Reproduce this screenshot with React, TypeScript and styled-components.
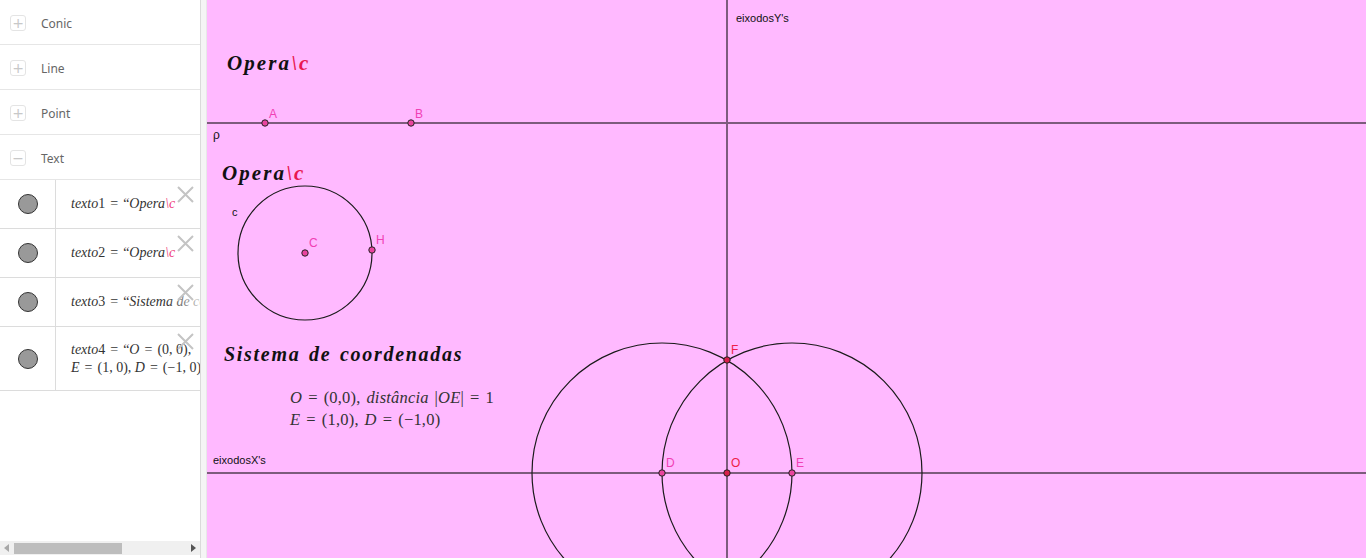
import React from "react";
import styled, { createGlobalStyle } from "styled-components";

const GlobalStyle = createGlobalStyle`
  html, body {
    margin: 0;
    padding: 0;
    height: 558px;
    overflow: hidden;
    background: #fff;
  }
  #root {
    height: 558px;
  }
`;

const Page = styled.div`
  display: flex;
  height: 558px;
  width: 1366px;
  font-family: "Liberation Sans", Arial, sans-serif;
`;

/* ---------- algebra panel ---------- */

const Panel = styled.aside`
  width: 200px;
  flex: none;
  display: flex;
  flex-direction: column;
  background: #fff;
  overflow: hidden;
`;

const Category = styled.div`
  height: 45px;
  padding-top: 2px;
  box-sizing: border-box;
  display: flex;
  align-items: center;
  border-bottom: 1px solid #e6e6e6;
  font-family: "Noto Sans", "Open Sans", sans-serif;
  font-size: 12px;
  color: #666;
`;

const Toggle = styled.span`
  width: 14px;
  height: 14px;
  margin: 0 15px 0 10px;
  border: 1px solid #e4e4e4;
  border-radius: 3px;
  display: flex;
  align-items: center;
  justify-content: center;
  color: #c8c8c8;
  font-size: 14px;
  line-height: 1;
  font-family: "DejaVu Sans", sans-serif;
`;

const ItemRow = styled.div<{ $h: number }>`
  position: relative;
  height: ${(p) => p.$h}px;
  display: grid;
  grid-template-columns: 56px 1fr;
  border-bottom: 1px solid #dcdcdc;
`;

const MarbleCell = styled.div`
  border-right: 1px solid #dcdcdc;
  display: flex;
  align-items: center;
  justify-content: center;
`;

const Marble = styled.span`
  width: 18px;
  height: 18px;
  border-radius: 50%;
  background: #999;
  border: 1px solid #333;
`;

const ItemText = styled.div`
  display: flex;
  flex-direction: column;
  justify-content: center;
  padding-left: 15px;
  white-space: nowrap;
  overflow: hidden;
  font-family: "Liberation Serif", "DejaVu Serif", serif;
  font-size: 14px;
  line-height: 18px;
  color: #333;
`;

const Eq = styled.span`
  margin: 0 5px;
`;

const Close = styled.svg`
  position: absolute;
  right: 6px;
  top: 6px;
  width: 17px;
  height: 17px;
`;

const Fade = styled.span`
  position: absolute;
  right: 0;
  top: 0;
  bottom: 0;
  width: 34px;
  background: linear-gradient(to right, rgba(255, 255, 255, 0), rgba(255, 255, 255, 0.75));
`;

const I = styled.i`
  font-style: italic;
`;

const Red = styled.span`
  color: #ee3d7c;
  font-style: italic;
`;

const Filler = styled.div`
  flex: 1;
`;

const Scrollbar = styled.div`
  height: 14px;
  margin-bottom: 3px;
  background: #f0f0f0;
  display: flex;
  align-items: center;
  padding: 0 4px;
  gap: 5px;
`;

const Arrow = styled.span<{ $dir: "l" | "r"; $c: string }>`
  width: 0;
  height: 0;
  border-top: 4px solid transparent;
  border-bottom: 4px solid transparent;
  ${(p) =>
    p.$dir === "l"
      ? `border-right: 5px solid ${p.$c};`
      : `border-left: 5px solid ${p.$c};`}
`;

const Thumb = styled.span`
  width: 108px;
  height: 11px;
  background: #bdbdbd;
`;

const Track = styled.span`
  flex: 1;
`;

const Divider = styled.div`
  width: 5px;
  flex: none;
  background: #f5f5f5;
  border-left: 1px solid #dadada;
  border-right: 1px solid #e8e8e8;
`;

/* ---------- graphics view ---------- */

const Canvas = styled.main`
  position: relative;
  flex: 1;
  background: #ffb9ff;
  overflow: hidden;
`;

const Drawing = styled.svg`
  position: absolute;
  inset: 0;
  width: 100%;
  height: 100%;
`;

const Caption = styled.div<{ $x: number; $y: number; $size: number; $track: number }>`
  position: absolute;
  left: ${(p) => p.$x}px;
  top: ${(p) => p.$y}px;
  font-family: "Liberation Serif", "DejaVu Serif", serif;
  font-size: ${(p) => p.$size}px;
  font-weight: 700;
  font-style: italic;
  letter-spacing: ${(p) => p.$track}px;
  word-spacing: 2px;
  color: #111;
  line-height: ${(p) => p.$size + 4}px;
  white-space: nowrap;
`;

const Formula = styled.div<{ $x: number; $y: number }>`
  position: absolute;
  left: ${(p) => p.$x}px;
  top: ${(p) => p.$y}px;
  font-family: "Liberation Serif", "DejaVu Serif", serif;
  font-size: 16.5px;
  letter-spacing: 0.2px;
  word-spacing: 1.5px;
  color: #333;
  line-height: 22px;
  white-space: nowrap;
`;

const MathEq = styled.span`
  margin: 0 6px;
`;

const Slash = styled.span`
  color: #e8174f;
`;

const ox = 207;

type Pt = { x: number; y: number; label: string; lx: number; ly: number; red?: boolean };

const points: Pt[] = [
  { x: 265, y: 123, label: "A", lx: 269, ly: 118 },
  { x: 411, y: 123, label: "B", lx: 415, ly: 118 },
  { x: 305, y: 253, label: "C", lx: 309, ly: 247 },
  { x: 372, y: 250, label: "H", lx: 376, ly: 244 },
  { x: 662, y: 473, label: "D", lx: 666, ly: 467 },
  { x: 792, y: 473, label: "E", lx: 796, ly: 467 },
  { x: 727, y: 473, label: "O", lx: 731, ly: 467, red: true },
  { x: 727, y: 360, label: "F", lx: 731, ly: 354, red: true },
];

const items = [
  {
    h: 48,
    lines: [
      <>
        <I>texto</I>1<Eq>=</Eq>“<I>Opera</I>
        <Red>\c</Red>
      </>,
    ],
  },
  {
    h: 48,
    lines: [
      <>
        <I>texto</I>2<Eq>=</Eq>“<I>Opera</I>
        <Red>\c</Red>
      </>,
    ],
  },
  {
    h: 48,
    lines: [
      <>
        <I>texto</I>3<Eq>=</Eq>“<I>Sistema de coordenadas</I>
      </>,
    ],
    fade: true,
  },
  {
    h: 63,
    lines: [
      <>
        <I>texto</I>4<Eq>=</Eq>“<I>O</I>
        <Eq>=</Eq>(0, 0),&nbsp;&nbsp;&nbsp;<I>distância</I>
      </>,
      <>
        <I>E</I>
        <Eq>=</Eq>(1, 0), <I>D</I>
        <Eq>=</Eq>(−1, 0)
      </>,
    ],
  },
];

function CloseIcon() {
  return (
    <Close viewBox="0 0 17 17">
      <path d="M1 1 L16 16 M16 1 L1 16" stroke="#c4c4c4" strokeWidth="2" fill="none" />
    </Close>
  );
}

export default function App() {
  return (
    <>
      <GlobalStyle />
      <Page>
        <Panel>
          {[
            ["+", "Conic"],
            ["+", "Line"],
            ["+", "Point"],
            ["−", "Text"],
          ].map(([sign, name]) => (
            <Category key={name}>
              <Toggle>{sign}</Toggle>
              {name}
            </Category>
          ))}
          {items.map((it, i) => (
            <ItemRow key={i} $h={it.h}>
              <MarbleCell>
                <Marble />
              </MarbleCell>
              <ItemText>
                {it.lines.map((l, j) => (
                  <div key={j}>{l}</div>
                ))}
              </ItemText>
              {it.fade && <Fade />}
              <CloseIcon />
            </ItemRow>
          ))}
          <Filler />
          <Scrollbar>
            <Arrow $dir="l" $c="#a8a8a8" />
            <Thumb />
            <Track />
            <Arrow $dir="r" $c="#555" />
          </Scrollbar>
        </Panel>
        <Divider />
        <Canvas>
          <Drawing>
            <g stroke="#7d5c7d" strokeWidth="2">
              <line x1="0" y1="123" x2="1200" y2="123" />
              <line x1="0" y1="473" x2="1200" y2="473" />
              <line x1={727 - ox} y1="0" x2={727 - ox} y2="600" />
            </g>
            <g stroke="#1a1a1a" strokeWidth="1.2" fill="none">
              <circle cx={305 - ox} cy="253" r="67" />
              <circle cx={662 - ox} cy="473" r="130" />
              <circle cx={792 - ox} cy="473" r="130" />
            </g>
            {points.map((p) => (
              <g key={p.label}>
                <circle
                  cx={p.x - ox}
                  cy={p.y}
                  r="3.2"
                  fill={p.red ? "#d8204c" : "#e8449e"}
                  stroke="#222"
                  strokeWidth="1"
                />
                <text
                  x={p.lx - ox}
                  y={p.ly}
                  fontFamily="Liberation Sans, Arial, sans-serif"
                  fontSize="12"
                  fill={p.red ? "#ee1e48" : "#f040b4"}
                >
                  {p.label}
                </text>
              </g>
            ))}
            <g fontFamily="Liberation Sans, Arial, sans-serif" fontSize="11" fill="#111">
              <text x={736 - ox} y="22">eixodosY's</text>
              <text x={213 - ox} y="464">eixodosX's</text>
              <text x={213 - ox} y="139" fontSize="12">ρ</text>
              <text x={232 - ox} y="216">c</text>
            </g>
          </Drawing>

          <Caption $x={20} $y={51} $size={21} $track={2.1}>
            Opera<Slash>\c</Slash>
          </Caption>
          <Caption $x={15} $y={161} $size={21} $track={2.1}>
            Opera<Slash>\c</Slash>
          </Caption>
          <Caption $x={17} $y={342} $size={20} $track={1.7}>
            Sistema de coordenadas
          </Caption>
          <Formula $x={83} $y={387}>
            <I>O</I>
            <MathEq>=</MathEq>(0,0), <I>distância</I> |<I>OE</I>|<MathEq>=</MathEq>1
            <br />
            <I>E</I>
            <MathEq>=</MathEq>(1,0), <I>D</I>
            <MathEq>=</MathEq>(−1,0)
          </Formula>
        </Canvas>
      </Page>
    </>
  );
}
